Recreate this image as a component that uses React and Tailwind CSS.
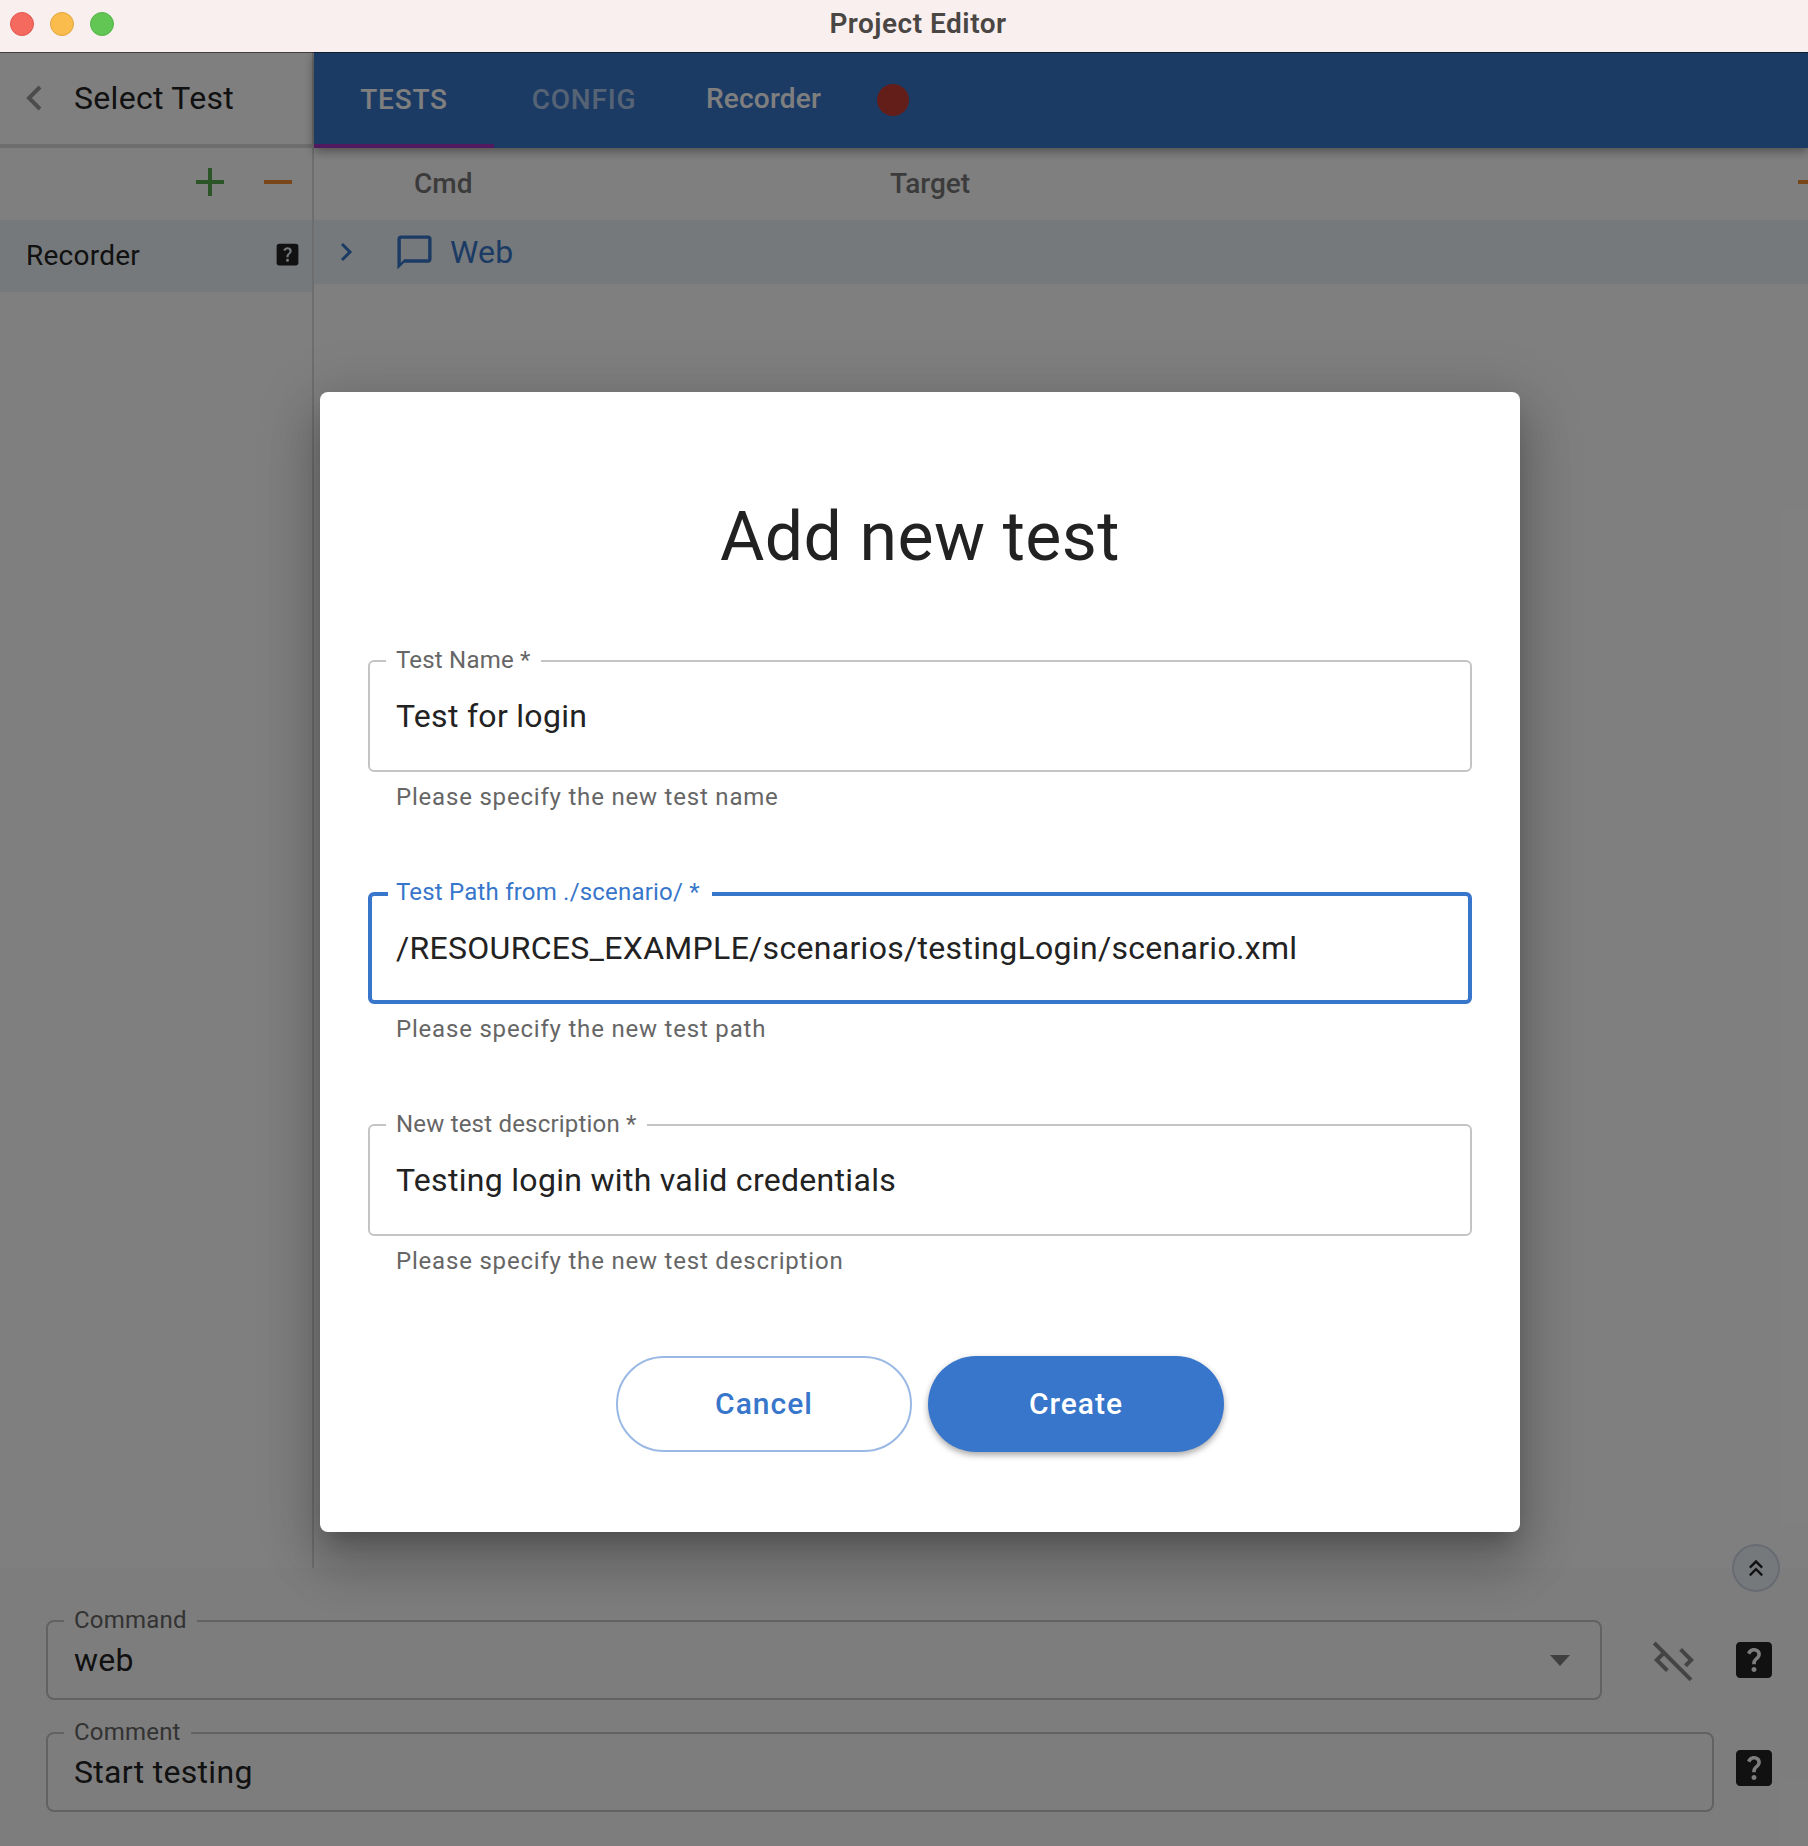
import React from 'react';
import { MdAdd, MdRemove, MdHelpCenter, MdChatBubbleOutline, MdCodeOff, MdKeyboardDoubleArrowUp } from 'react-icons/md';

const Field = ({ label, value, helper, focused }) => (
  <div className="mb-[81px]">
    <div className={`relative h-[112px] rounded-[6px] flex items-center ${focused ? 'pl-[24px] border-4 border-[#3776cb]' : 'pl-[26px] border-2 border-[#c4c4c4]'}`}>
      <span className={`absolute bg-white text-[24px] leading-[26px] tracking-[0.2px] ${focused ? 'left-[16px] top-[-17px] pl-[8px] pr-[12px] text-[#3776cb]' : 'left-[16px] top-[-15px] px-[10px] text-[#666]'}`}>{label}</span>
      <span className="text-[32px] tracking-[0.3px] text-[#222]">{value}</span>
    </div>
    <p className="mt-[11px] pl-[28px] h-[28px] text-[24px] leading-[28px] tracking-[0.8px] text-[#666]">{helper}</p>
  </div>
);

const BottomField = ({ label, value, width, children }) => (
  <div className={`relative h-[80px] shrink-0 rounded-[8px] border-2 border-[#c4c4c4] flex items-center justify-between pl-[26px] pr-[24px] ${width}`}>
    <span className="absolute left-[16px] top-[-15px] bg-[#fbfbfb] px-[10px] text-[24px] leading-[26px] tracking-[0.2px] text-[#666]">{label}</span>
    <span className="text-[32px] tracking-[0.3px] text-[#222]">{value}</span>
    {children}
  </div>
);

const App = () => {
  return (
    <div className="relative h-screen w-full flex flex-col overflow-hidden bg-white font-['Roboto',sans-serif]">
      {/* native title bar */}
      <div className="relative z-20 h-[52px] shrink-0 bg-[#f9efee] flex items-center justify-center pl-[28px] pb-[4px] shadow-[0_1px_0_rgba(0,0,0,0.5)]">
        <div className="absolute left-[10px] top-[12px] flex gap-[16px]">
          <span className="w-[24px] h-[24px] rounded-full bg-[#f46a5f] border border-[#e0574d]" />
          <span className="w-[24px] h-[24px] rounded-full bg-[#f9bc4d] border border-[#e0a73f]" />
          <span className="w-[24px] h-[24px] rounded-full bg-[#62c655] border border-[#55b44a]" />
        </div>
        <span className="text-[28px] font-semibold tracking-[0.5px] text-[#4a4644]">Project Editor</span>
      </div>

      <div className="flex-1 flex min-h-0">
        {/* test list */}
        <div className="w-[314px] shrink-0 border-r-2 border-[#dcdcdc] flex flex-col">
          <div className="h-[96px] border-b-4 border-[#dcdcdc] flex items-center pl-[26px]">
            <svg width="16" height="26" viewBox="0 0 16 26" fill="none" stroke="#999" strokeWidth="4"><path d="M14 2 3 13l11 11" /></svg>
            <span className="ml-[32px] text-[32px] tracking-[0.3px] text-[#222]">Select Test</span>
          </div>
          <div className="h-[72px] flex items-center justify-end pr-[10px] pb-[4px] gap-[20px]">
            <MdAdd size={48} className="text-[#56ab4c]" />
            <MdRemove size={48} className="text-[#f08c32]" />
          </div>
          <div className="h-[72px] bg-[#ebf2f8] flex items-center justify-between pl-[26px] pr-[10px]">
            <span className="text-[28px] tracking-[0.25px] text-[#222]">Recorder</span>
            <MdHelpCenter size={29} className="mb-[4px] text-[#222]" />
          </div>
        </div>

        <div className="flex-1 min-w-0 flex flex-col">
          <div className="relative h-[96px] bg-[#3776cb] flex shadow-[0_3px_10px_rgba(0,0,0,0.4)]">
            <div className="w-[180px] h-[96px] border-b-4 border-[#a032c0] flex items-center justify-center text-[28px] font-medium tracking-[0.8px] text-white pt-[4px]">TESTS</div>
            <div className="w-[180px] flex items-center justify-center text-[28px] font-medium tracking-[0.8px] text-white/60">CONFIG</div>
            <div className="ml-[32px] pb-[2px] flex items-center text-[28px] tracking-[0.2px] font-medium text-white">Recorder</div>
            <div className="ml-[56px] self-center w-[32px] h-[32px] rounded-full bg-[#c83c32]" />
          </div>
          <div className="h-[72px] flex items-center overflow-hidden text-[28px] font-medium text-[#777]">
            <span className="ml-[100px] w-[476px]">Cmd</span>
            <span>Target</span>
            <MdRemove size={48} className="ml-auto mr-[-28px] mb-[4px] shrink-0 text-[#f08c32]" />
          </div>
          <div className="h-[64px] bg-[#ebf2f8] flex items-center text-[#3776cb]">
            <svg className="ml-[25px]" width="14" height="20" viewBox="0 0 14 20" fill="none" stroke="currentColor" strokeWidth="3"><path d="M3 2l8 8-8 8" /></svg>
            <MdChatBubbleOutline size={41} className="ml-[41px]" />
            <span className="ml-[15px] text-[32px] tracking-[0.2px]">Web</span>
          </div>
        </div>
      </div>

      {/* command panel */}
      <div className="relative h-[278px] shrink-0 bg-[#fbfbfb] pt-[52px] pl-[46px] flex flex-col gap-[32px]">
        <div className="flex items-center">
          <BottomField label="Command" value="web" width="w-[1556px]">
            <span className="w-0 h-0 mr-[6px] border-x-[10px] border-t-[11px] border-x-transparent border-t-[#808080]" />
          </BottomField>
          <MdCodeOff size={48} className="ml-[48px] shrink-0 text-[#888]" />
          <MdHelpCenter size={48} className="ml-[32px] shrink-0 text-[#222]" />
        </div>
        <div className="flex items-center">
          <BottomField label="Comment" value="Start testing" width="w-[1668px]" />
          <MdHelpCenter size={48} className="ml-[16px] mb-[8px] shrink-0 text-[#222]" />
        </div>
        <div className="absolute right-[28px] top-[-24px] w-[48px] h-[48px] rounded-full border-2 border-[#d0d8e4] bg-[#ebf2f8] flex items-center justify-center">
          <MdKeyboardDoubleArrowUp size={28} className="text-[#222]" />
        </div>
      </div>

      {/* modal backdrop */}
      <div className="absolute top-[52px] inset-x-0 bottom-0 z-10 bg-black/50 flex justify-center items-start pt-[340px] pl-[32px]">
        <div className="w-[1200px] h-[1140px] bg-white rounded-[8px] shadow-[0_15px_20px_-9px_rgba(0,0,0,0.2),0_32px_50px_4px_rgba(0,0,0,0.16),0_12px_60px_10px_rgba(0,0,0,0.14)] px-[48px] pt-[105px]">
          <h1 className="text-center text-[68px] leading-[80px] tracking-[0.4px] text-[#222] mb-[83px]">Add new test</h1>
          <Field label="Test Name *" value="Test for login" helper="Please specify the new test name" />
          <Field focused label="Test Path from ./scenario/ *" value="/RESOURCES_EXAMPLE/scenarios/testingLogin/scenario.xml" helper="Please specify the new test path" />
          <Field label="New test description *" value="Testing login with valid credentials" helper="Please specify the new test description" />
          <div className="flex justify-center gap-[16px]">
            <button className="w-[296px] h-[96px] pb-[2px] rounded-full border-2 border-[#9bb9e5] text-[30px] font-medium tracking-[1px] text-[#3776cb]">Cancel</button>
            <button className="w-[296px] h-[96px] pb-[2px] rounded-full bg-[#3776cb] text-[30px] font-medium tracking-[1px] text-white shadow-[0_3px_6px_rgba(0,0,0,0.35)]">Create</button>
          </div>
        </div>
      </div>
    </div>
  );
};

export default App;
